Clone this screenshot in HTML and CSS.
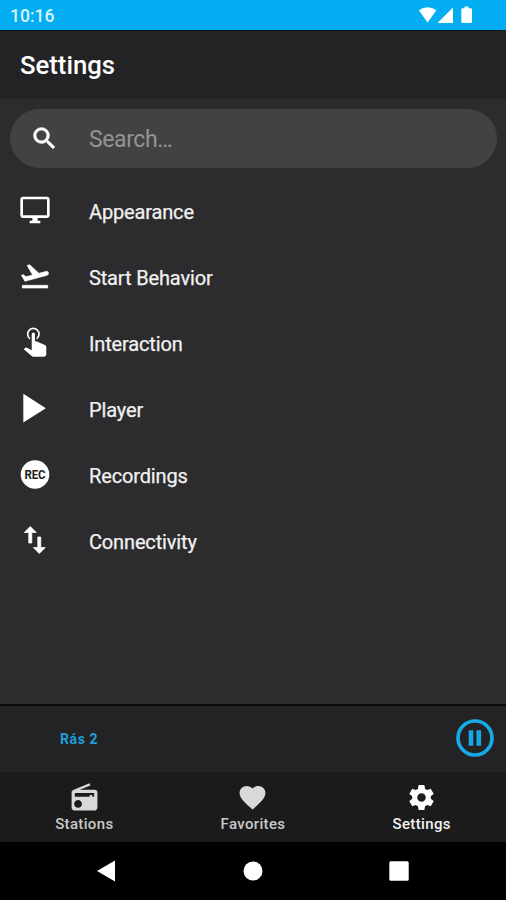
FILE: index.html
```html
<!DOCTYPE html>
<html lang="en">
<head>
<meta charset="utf-8">
<title>Settings</title>
<link rel="stylesheet" href="styles.css">
</head>
<body>
<div class="screen">
  <div class="status">
    <span class="clock">10:16</span>
    <svg class="status-icons" width="56" height="18" viewBox="0 0 56 18" fill="#fff">
      <path d="M0.800 4.200Q9.600 -1.800 18.400 4.200L9.600 16.500z"/><path d="M35 1.500V17H19.500z"/>
      <path d="M46.500 0.500h4v1.800h2.300q1.200 0 1.200 1.200V15.800q0 1.200-1.200 1.200h-8.300q-1.200 0-1.200-1.200V3.500q0-1.200 1.200-1.200h2z"/>
    </svg>
  </div>
  <header class="title"><h1>Settings</h1></header>
  <main class="content">
    <div class="search">
      <svg class="search-icon" viewBox="0 0 24 24"><path d="M15.500 14h-.79l-.28-.27A6.471 6.471 0 0 0 16 9.500 6.500 6.500 0 1 0 9.500 16c1.610 0 3.090-.59 4.230-1.570l.27.28v.79l5 4.990L20.490 19l-4.990-5zm-6 0C7.010 14 5 11.990 5 9.500S7.010 5 9.500 5 14 7.010 14 9.500 11.990 14 9.500 14z"/></svg>
      <span>Search…</span>
    </div>
    <ul class="list">
      <li><svg viewBox="0 0 24 24"><path d="M21 2H3c-1.100 0-2 .9-2 2v12c0 1.100.9 2 2 2h7v2H8v2h8v-2h-2v-2h7c1.100 0 2-.9 2-2V4c0-1.100-.9-2-2-2zm0 14H3V4h18v12z"/></svg><span>Appearance</span></li>
      <li><svg class="bold" viewBox="0 0 24 24"><path d="M2.500 19h19v2h-19zm19.570-9.360c-.21-.8-1.040-1.280-1.840-1.060L14.920 10l-6.900-6.430-1.930.51 4.140 7.170-4.970 1.330-1.970-1.540-1.450.39 2.590 4.490L21 11.490c.81-.23 1.280-1.050 1.070-1.850z"/></svg><span>Start Behavior</span></li>
      <li><svg viewBox="2.15 4 19.75 19.75"><path d="M10,9A1,1 0 0,1 11,8A1,1 0 0,1 12,9V13.470L13.210,13.600L18.150,15.790C18.680,16.030 19,16.560 19,17.140V21.500C18.970,22.320 18.320,22.970 17.500,23H11C10.620,23 10.260,22.850 10,22.570L5.100,18.370L5.840,17.600C6.030,17.390 6.300,17.280 6.580,17.280H6.800L10,19V9M11,5A4,4 0 0,1 15,9C15,10.500 14.200,11.770 13,12.460V11.240C13.610,10.690 14,9.890 14,9A3,3 0 0,0 11,6A3,3 0 0,0 8,9C8,9.890 8.390,10.690 9,11.240V12.460C7.800,11.770 7,10.500 7,9A4,4 0 0,1 11,5Z"/></svg><span>Interaction</span></li>
      <li><svg viewBox="5.9 4.1 15.6 15.6"><path d="M8 5v14l11-7z"/></svg><span>Player</span></li>
      <li><svg viewBox="0 0 32 32"><circle cx="16" cy="16.500" r="14.300"/><text class="rec" x="16" y="20.800" text-anchor="middle" textLength="21" lengthAdjust="spacingAndGlyphs">REC</text></svg><span>Recordings</span></li>
      <li><svg class="bold" viewBox="1.5 1.35 21.3 21.3"><path d="M16 17.010V10h-2v7.010h-3L15 21l4-3.990h-3zM9 3L5 6.990h3V14h2V6.990h3L9 3z"/></svg><span>Connectivity</span></li>
    </ul>
  </main>
  <section class="player">
    <span class="station">Rás 2</span>
    <svg width="38" height="38" viewBox="0 0 38 38"><circle cx="19" cy="19" r="17" fill="none" stroke="#16a9e8" stroke-width="3.700"/><path fill="#16a9e8" d="M12.700 11.200h4.600v15.600h-4.600zM20.500 11.200h4.600v15.600h-4.600z"/></svg>
  </section>
  <nav class="tabs">
    <div class="tab"><svg viewBox="0 0 24 24"><path d="M3.240 6.150C2.510 6.430 2 7.170 2 8v12c0 1.100.89 2 2 2h16c1.110 0 2-.9 2-2V8c0-1.110-.89-2-2-2H8.300l8.260-3.340L15.880 1 3.240 6.150zM7 20c-1.660 0-3-1.340-3-3s1.340-3 3-3 3 1.340 3 3-1.340 3-3 3zm12.500-8.500h-1.500v-1.500h-2v1.500H4.500V8.500h15v3z"/></svg><span>Stations</span></div>
    <div class="tab"><svg viewBox="0 0 24 24"><path d="M12 21.350l-1.450-1.320C5.400 15.360 2 12.280 2 8.500 2 5.420 4.420 3 7.500 3c1.740 0 3.410.81 4.500 2.090C13.090 3.810 14.760 3 16.500 3 19.580 3 22 5.420 22 8.500c0 3.780-3.400 6.860-8.550 11.540L12 21.350z"/></svg><span>Favorites</span></div>
    <div class="tab active"><svg viewBox="0 0 24 24"><path d="M19.140 12.940c.04-.3.06-.61.06-.94 0-.32-.02-.64-.07-.94l2.030-1.580c.18-.14.23-.41.12-.61l-1.920-3.320c-.12-.22-.37-.29-.59-.22l-2.390.96c-.5-.38-1.030-.7-1.620-.94l-.36-2.540c-.04-.24-.24-.41-.48-.41h-3.840c-.24 0-.43.17-.47.41l-.36 2.540c-.59.24-1.130.57-1.620.94l-2.390-.96c-.22-.08-.47 0-.59.22L2.740 8.870c-.12.21-.08.47.12.61l2.030 1.580c-.05.3-.09.63-.09.94s.02.64.07.94l-2.030 1.580c-.18.14-.23.41-.12.61l1.920 3.320c.12.22.37.29.59.22l2.390-.96c.5.38 1.030.7 1.620.94l.36 2.540c.05.24.24.41.48.41h3.840c.24 0 .44-.17.47-.41l.36-2.540c.59-.24 1.130-.56 1.620-.94l2.390.96c.22.08.47 0 .59-.22l1.920-3.320c.12-.22.07-.47-.12-.61l-2.010-1.580zM12 15.300c-1.820 0-3.300-1.480-3.300-3.300s1.480-3.300 3.300-3.300 3.300 1.480 3.300 3.300-1.480 3.300-3.300 3.300z"/></svg><span>Settings</span></div>
  </nav>
  <div class="system">
    <svg width="20" height="22" viewBox="0 0 20 22"><path d="M1 11L19 0.500v21z"/></svg>
    <svg width="20" height="20" viewBox="0 0 20 20"><circle cx="10" cy="10" r="9.500"/></svg>
    <svg width="20" height="20" viewBox="0 0 20 20"><rect x="0.300" y="0.300" width="19.400" height="19.400" rx="1.500"/></svg>
  </div>
</div>
</body>
</html>
```
FILE: styles.css
```css
* { box-sizing: border-box; }
body { margin: 0; background: #000; font-family: Roboto, sans-serif; color: #f1f1f1; }
svg { display: block; flex: none; }
.screen { width: 506px; height: 900px; display: flex; flex-direction: column; overflow: hidden; background: #2c2c2e; }
.status { height: 31px; flex: none; display: flex; justify-content: space-between; align-items: center; padding: 0 32px 0 10px; background: #02adf1; border-bottom: 1px solid #06141b; }
.clock { font-size: 17.500px; font-weight: 500; line-height: 30px; color: #d9f3fd; padding-top: 2px; }
.title { height: 68px; flex: none; display: flex; align-items: center; padding: 0 20px; background: #232325; }
h1 { margin: 0; font-size: 25.700px; font-weight: 500; color: #fff; }
.content { flex: 1; padding: 10px 9px 0 10px; }
.search { height: 59px; display: flex; align-items: center; border-radius: 30px; background: #424242; padding-left: 20px; font-size: 23px; letter-spacing: -0.400px; color: #949494; }
.search span { padding-top: 1px; }
.search-icon { width: 29px; height: 29px; fill: #fff; stroke: #fff; stroke-width: 0.6; margin: -1px 30px 0 0; }
.list { list-style: none; margin: 10px 0 0; padding: 0 0 0 9px; }
.list li { height: 66px; display: flex; align-items: center; font-size: 20px; letter-spacing: -0.150px; -webkit-text-stroke: 0.250px; }
.list span { padding-top: 2px; }
.list svg { width: 32px; height: 32px; fill: #fff; margin: -2px 38px 0 0; }
.list .bold { stroke: #fff; stroke-width: 0.5; }
.rec { font: bold 12px Roboto, sans-serif; fill: #222; -webkit-text-stroke: 0; }
.player { height: 68px; flex: none; display: flex; justify-content: space-between; align-items: center; padding: 0 12px 2px 60px; border-top: 2px solid #09090a; background: #232325; }
.station { font-size: 14px; font-weight: 700; letter-spacing: 0.600px; padding-top: 2px; color: #1b9fd9; }
.tabs { height: 70px; flex: none; display: grid; grid-template-columns: repeat(3, 1fr); background: #1b1b1b; }
.tab { display: flex; flex-direction: column; align-items: center; padding-top: 10px; font-size: 15px; line-height: 18px; font-weight: 500; letter-spacing: 0.350px; color: #c9c9c9; }
.tab svg { width: 31px; height: 31px; fill: #d9d9d9; margin-bottom: 2px; }
.tab.active { color: #f2f2f2; }
.tab.active svg { fill: #fff; }
.system { height: 58px; flex: none; display: flex; justify-content: space-between; align-items: center; padding: 0 97px 0 96px; background: #000; }
.system svg { fill: #fff; }
```
